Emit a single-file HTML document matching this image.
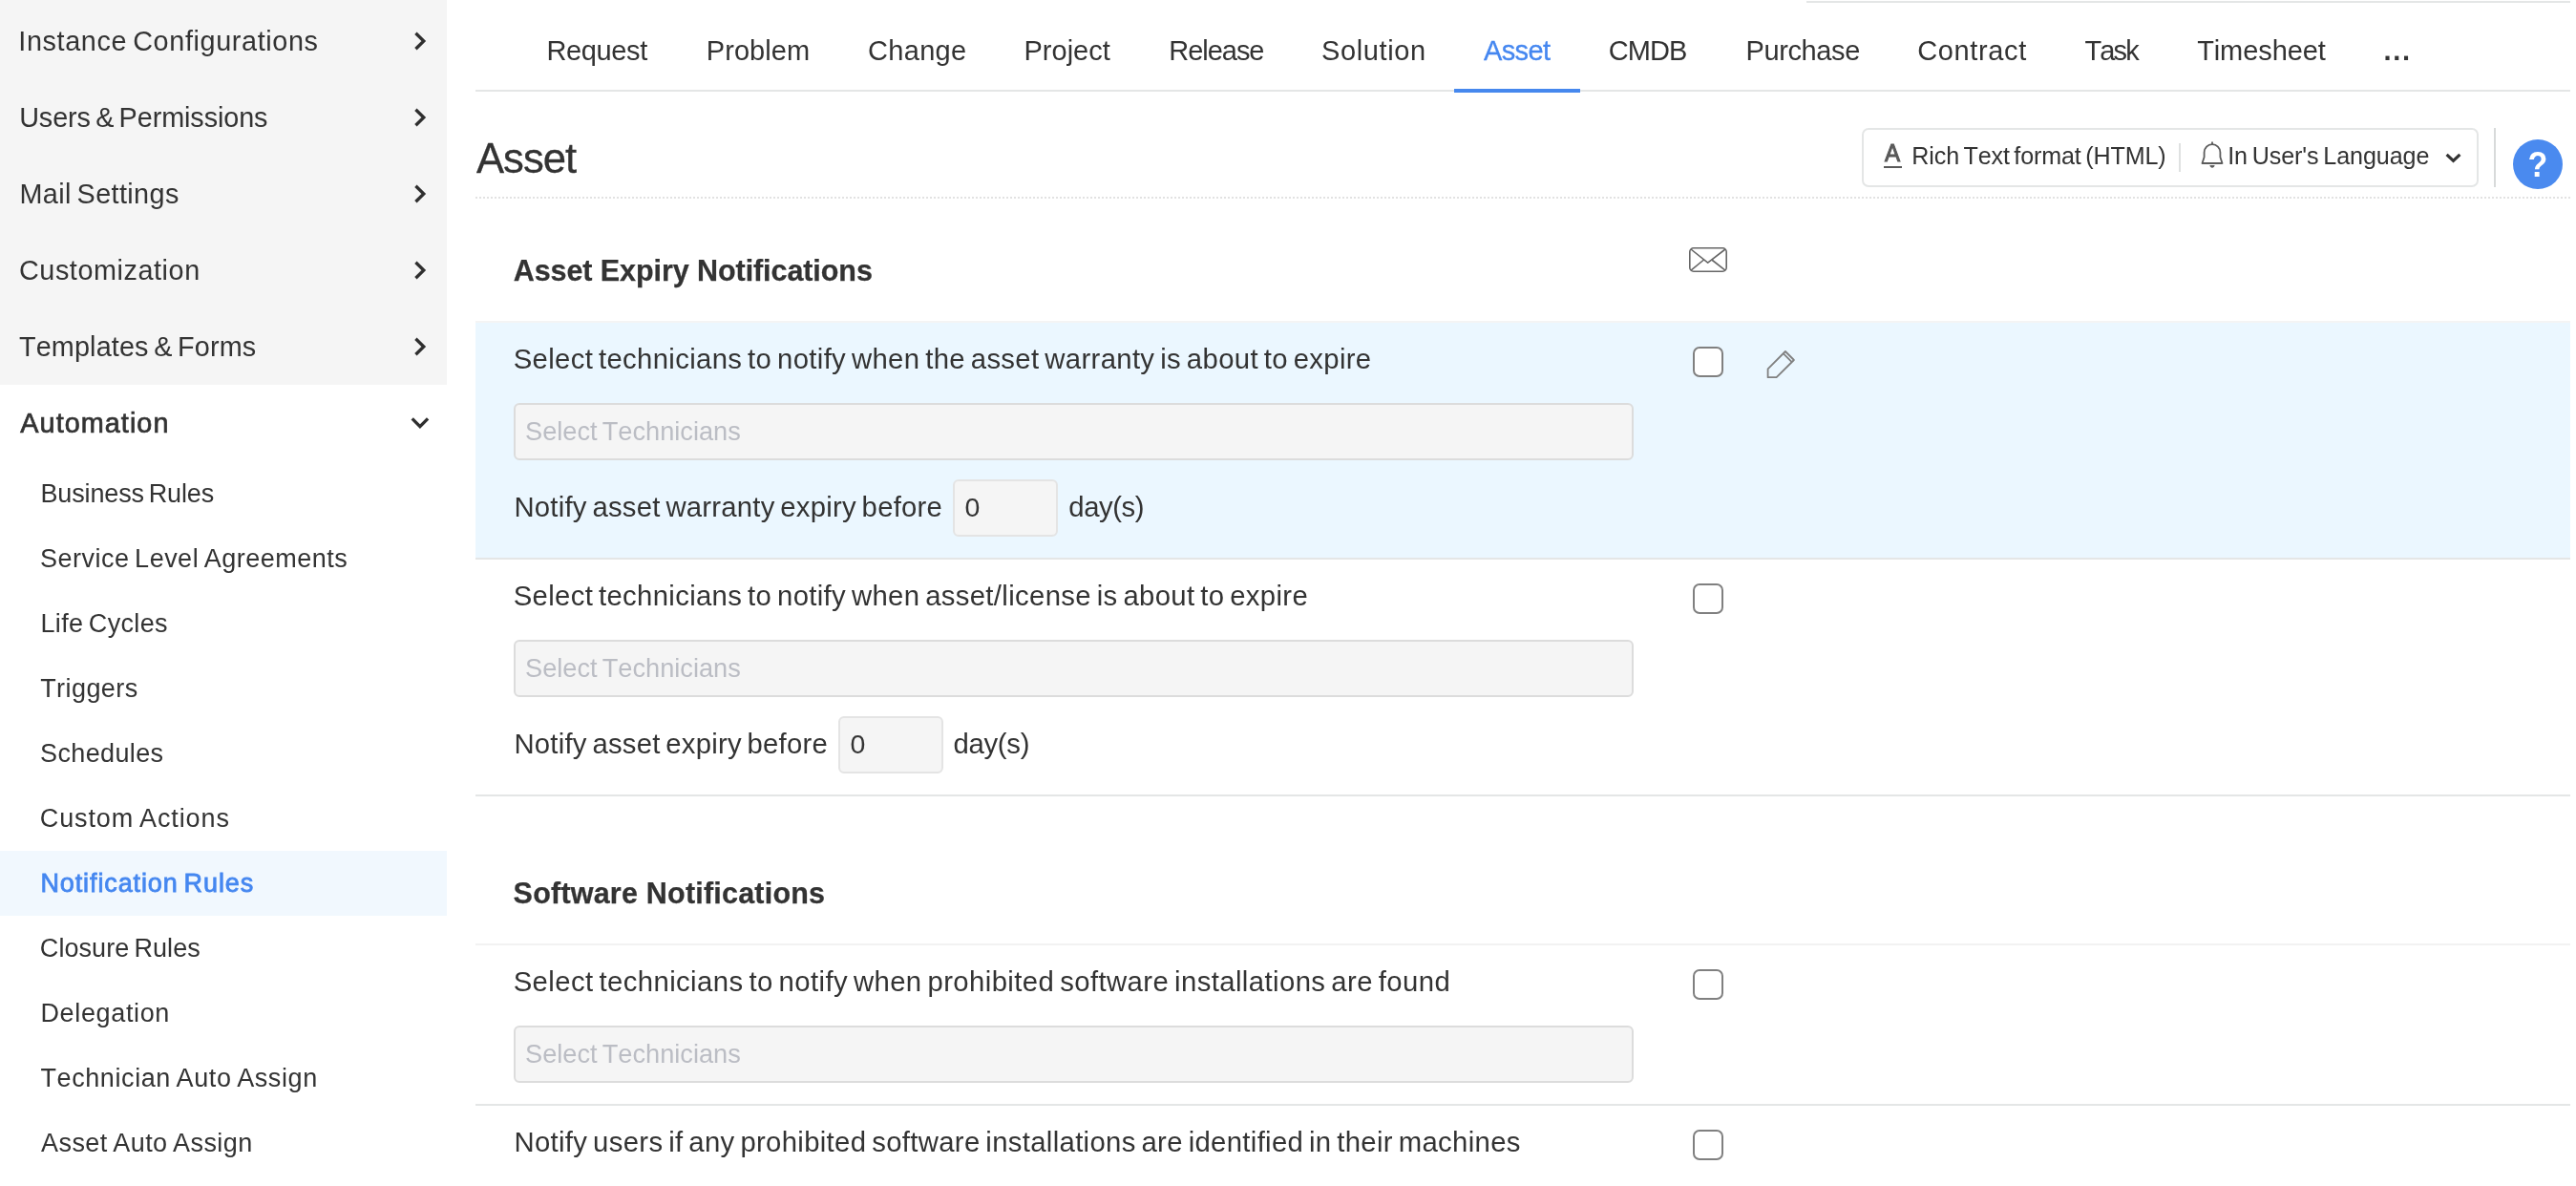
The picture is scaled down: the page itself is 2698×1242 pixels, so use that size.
<!DOCTYPE html>
<html lang="en"><head><meta charset="utf-8"><title>Notification Rules - Asset</title>
<style>
html,body{margin:0;padding:0;background:#fff;}
body{width:2698px;height:1242px;position:relative;overflow:hidden;font-family:"Liberation Sans",Arial,sans-serif;color:#333;}
.g{position:absolute;left:0;top:0;width:2698px;height:1242px;margin:0;padding:0;will-change:transform;}
.b{position:absolute;box-sizing:content-box;}
.ic{left:0;top:0;}
.t{position:absolute;margin:0;padding:0;white-space:nowrap;line-height:1;font-weight:400;color:#333;font-kerning:none;text-decoration:none;}
.inp{border:2px solid #dcdcdc;border-radius:6px;background:#f5f5f5;}
.cb{width:28px;height:28px;border:2px solid #808080;border-radius:7px;background:#fff;}
</style></head><body>
<aside class="g" id="sidebar">
<div class="b" style="left:0px;top:0px;width:468px;height:403px;background:#f5f5f5;"></div>
<div class="b" style="left:0px;top:891px;width:468px;height:68px;background:#f1f8fe;"></div>
<svg class="b ic" width="2698" height="1242" viewBox="0 0 2698 1242" fill="none"><g stroke="#2f2f2f" stroke-width="3.3" stroke-linejoin="miter"><path d="M435.4 34.8L443.8 43.0L435.4 51.2"/><path d="M435.4 114.8L443.8 123.0L435.4 131.2"/><path d="M435.4 194.8L443.8 203.0L435.4 211.2"/><path d="M435.4 274.8L443.8 283.0L435.4 291.2"/><path d="M435.4 354.8L443.8 363.0L435.4 371.2"/><path d="M431.7 438.4L439.9 446.7L448.1 438.4"/></g></svg>
<a class="t" style="left:19.34px;top:29px;font-size:28.8px;letter-spacing:0.623px;word-spacing:-2.59px;">Instance Configurations</a>
<a class="t" style="left:20.13px;top:109px;font-size:28.8px;letter-spacing:-0.093px;word-spacing:-2.59px;">Users &amp; Permissions</a>
<a class="t" style="left:20.39px;top:189px;font-size:28.8px;letter-spacing:0.390px;word-spacing:-2.59px;">Mail Settings</a>
<a class="t" style="left:19.94px;top:269px;font-size:28.8px;letter-spacing:0.563px;">Customization</a>
<a class="t" style="left:19.95px;top:349px;font-size:28.8px;letter-spacing:0.138px;word-spacing:-2.59px;">Templates &amp; Forms</a>
<a class="t" style="left:21.34px;top:429px;font-size:28.8px;letter-spacing:1.049px;-webkit-text-stroke:0.7px #333;">Automation</a>
<a class="t" style="left:42.49px;top:504px;font-size:27.0px;letter-spacing:-0.151px;word-spacing:-2.43px;">Business Rules</a>
<a class="t" style="left:42.12px;top:572px;font-size:27.0px;letter-spacing:0.489px;word-spacing:-2.43px;">Service Level Agreements</a>
<a class="t" style="left:42.49px;top:640px;font-size:27.0px;letter-spacing:0.347px;word-spacing:-2.43px;">Life Cycles</a>
<a class="t" style="left:42.19px;top:708px;font-size:27.0px;letter-spacing:0.423px;">Triggers</a>
<a class="t" style="left:42.12px;top:776px;font-size:27.0px;letter-spacing:0.358px;">Schedules</a>
<a class="t" style="left:41.83px;top:844px;font-size:27.0px;letter-spacing:0.878px;word-spacing:-2.43px;">Custom Actions</a>
<a class="t" style="left:42.44px;top:912px;font-size:27.0px;letter-spacing:0.887px;word-spacing:-2.43px;color:#4587f0;-webkit-text-stroke:0.8px #4587f0;">Notification Rules</a>
<a class="t" style="left:41.83px;top:980px;font-size:27.0px;letter-spacing:0.067px;word-spacing:-2.43px;">Closure Rules</a>
<a class="t" style="left:42.49px;top:1048px;font-size:27.0px;letter-spacing:0.642px;">Delegation</a>
<a class="t" style="left:42.49px;top:1116px;font-size:27.0px;letter-spacing:0.589px;word-spacing:-2.43px;">Technician Auto Assign</a>
<a class="t" style="left:43.05px;top:1184px;font-size:27.0px;letter-spacing:0.435px;word-spacing:-2.43px;">Asset Auto Assign</a>
</aside>
<nav class="g" id="tabs">
<div class="b" style="left:1892px;top:1px;width:800px;height:2px;background:#e4e6e6;"></div>
<div class="b" style="left:498px;top:94px;width:2194px;height:2px;background:#e4e6e6;"></div>
<div class="b" style="left:1523px;top:93px;width:132px;height:4px;background:#4688ee;"></div>
<a class="t" style="left:572.42px;top:39px;font-size:29.0px;letter-spacing:-0.354px;">Request</a>
<a class="t" style="left:739.72px;top:39px;font-size:29.0px;letter-spacing:0.084px;">Problem</a>
<a class="t" style="left:909.03px;top:39px;font-size:29.0px;letter-spacing:0.315px;">Change</a>
<a class="t" style="left:1072.52px;top:39px;font-size:29.0px;letter-spacing:0.006px;">Project</a>
<a class="t" style="left:1224.32px;top:39px;font-size:29.0px;letter-spacing:-1.039px;">Release</a>
<a class="t" style="left:1384.08px;top:39px;font-size:29.0px;letter-spacing:0.600px;">Solution</a>
<a class="t" style="left:1553.94px;top:39px;font-size:29.0px;letter-spacing:-0.590px;color:#4587f0;-webkit-text-stroke:0.3px #4587f0;">Asset</a>
<a class="t" style="left:1684.63px;top:39px;font-size:29.0px;letter-spacing:-0.861px;">CMDB</a>
<a class="t" style="left:1828.42px;top:39px;font-size:29.0px;letter-spacing:-0.364px;">Purchase</a>
<a class="t" style="left:2008.13px;top:39px;font-size:29.0px;letter-spacing:0.655px;">Contract</a>
<a class="t" style="left:2183.45px;top:39px;font-size:29.0px;letter-spacing:-1.845px;">Task</a>
<a class="t" style="left:2301.15px;top:39px;font-size:29.0px;letter-spacing:-0.090px;">Timesheet</a>
<a class="t" style="left:2496.53px;top:39px;font-size:29.0px;letter-spacing:1.647px;font-weight:700;">...</a>
</nav>
<header class="g" id="page-header">
<h1 class="t" style="left:498.91px;top:145px;font-size:43.6px;letter-spacing:-0.935px;-webkit-text-stroke:0.3px #333;">Asset</h1>
<div class="b" style="left:498px;top:206px;width:2194px;height:2px;background:repeating-linear-gradient(90deg,#e2e2e2 0 2px,transparent 2px 4px);"></div>
<div class="b" style="left:1950px;top:134px;width:642px;height:58px;border:2px solid #e4e6e6;border-radius:7px;background:#fff;"></div>
<span class="t" style="left:1974.35px;top:148px;font-size:24.9px;color:#595959;-webkit-text-stroke:1px #595959;transform:scaleX(.97);transform-origin:0 0;">A</span>
<div class="b" style="left:1973px;top:174px;width:19px;height:2px;background:#5a5a5a;"></div>
<span class="t" style="left:2002.34px;top:151px;font-size:25.1px;letter-spacing:-0.138px;word-spacing:-2.26px;">Rich Text format (HTML)</span>
<div class="b" style="left:2282px;top:150px;width:2px;height:30px;background:#dfe1e1;"></div>
<svg class="b ic" width="2698" height="1242" viewBox="0 0 2698 1242" fill="none"><g stroke="#5c5c5c" stroke-width="1.8" stroke-linejoin="round"><path d="M2317 148.4V151"/><path d="M2306.5 171L2308.6 164.5V159.5A8.4 8.4 0 0 1 2325.4 159.5V164.5L2327.5 171Z"/><path d="M2314.8 173.6A2.3 2.3 0 0 0 2319.2 173.6Z" fill="#5c5c5c" stroke-width="1"/></g><path d="M2562.6 161.9L2569.5 168.3L2576.4 161.9" stroke="#333" stroke-width="3.2"/></svg>
<span class="t" style="left:2333.18px;top:151px;font-size:25.1px;letter-spacing:-0.061px;word-spacing:-2.26px;">In User's Language</span>
<div class="b" style="left:2612px;top:134px;width:2px;height:62px;background:#d8dada;"></div>
<div class="b" style="left:2632px;top:146px;width:52px;height:52px;border-radius:50%;background:#4a8aef;"></div>
<span class="t" style="left:2632px;top:154.1px;width:52px;text-align:center;font-size:37px;font-weight:700;color:#fff;transform:scaleX(.92);">?</span>
</header>
<section class="g" id="asset-expiry">
<h2 class="t" style="left:537.74px;top:268px;font-size:30.5px;letter-spacing:-0.074px;font-weight:700;-webkit-text-stroke:0.25px #333;">Asset Expiry Notifications</h2>
<div class="b" style="left:498px;top:336px;width:2194px;height:2px;background:#f4f4f4;"></div>
<div class="b" style="left:498px;top:338px;width:2194px;height:246px;background:#ebf7ff;"></div>
<div class="b" style="left:498px;top:584px;width:2194px;height:2px;background:#e4e6e6;"></div>
<label class="t" style="left:537.67px;top:361px;font-size:29.3px;letter-spacing:0.339px;word-spacing:-2.64px;">Select technicians to notify when the asset warranty is about to expire</label>
<div class="b cb" style="left:1773px;top:363px;"></div>
<div class="b inp" style="left:538px;top:422px;width:1169px;height:56px;"></div>
<span class="t" style="left:550.06px;top:438px;font-size:27.2px;word-spacing:-2.45px;color:#bbbdc4;">Select Technicians</span>
<label class="t" style="left:538.45px;top:516px;font-size:29.3px;letter-spacing:0.234px;word-spacing:-2.64px;">Notify asset warranty expiry before</label>
<div class="b inp" style="left:998px;top:502px;width:106px;height:56px;border-color:#e4e4e4;"></div>
<span class="t" style="left:1010.49px;top:517px;font-size:28.5px;">0</span>
<span class="t" style="left:1119.27px;top:516px;font-size:29.3px;letter-spacing:-0.431px;">day(s)</span>
<label class="t" style="left:537.67px;top:609px;font-size:29.3px;letter-spacing:0.338px;word-spacing:-2.64px;">Select technicians to notify when asset/license is about to expire</label>
<div class="b cb" style="left:1773px;top:611px;"></div>
<div class="b inp" style="left:538px;top:670px;width:1169px;height:56px;"></div>
<span class="t" style="left:550.06px;top:686px;font-size:27.2px;word-spacing:-2.45px;color:#bbbdc4;">Select Technicians</span>
<label class="t" style="left:538.45px;top:764px;font-size:29.3px;letter-spacing:0.228px;word-spacing:-2.64px;">Notify asset expiry before</label>
<div class="b inp" style="left:878px;top:750px;width:106px;height:56px;border-color:#e4e4e4;"></div>
<span class="t" style="left:890.49px;top:765px;font-size:28.5px;">0</span>
<span class="t" style="left:998.47px;top:764px;font-size:29.3px;letter-spacing:-0.291px;">day(s)</span>
<div class="b" style="left:498px;top:832px;width:2194px;height:2px;background:#e4e6e6;"></div>
<svg class="b ic" width="2698" height="1242" viewBox="0 0 2698 1242" fill="none"><g stroke="#666" stroke-width="1.6" stroke-linejoin="round"><rect x="1769.8" y="259.8" width="38.4" height="24.4" rx="4"/><path d="M1771 261L1788.7 275.2L1807 261"/><path d="M1771 283.2L1784.6 272M1807 283.2L1792.8 272"/></g><g stroke="#808080" stroke-width="1.8" stroke-linejoin="round"><path d="M1851.6 395.2V386.3L1869.9 368L1878.9 377L1860.6 395.2Z"/><path d="M1867.7 370.2L1876.7 379.2"/></g></svg>
</section>
<section class="g" id="software">
<h2 class="t" style="left:537.62px;top:920px;font-size:30.5px;letter-spacing:0.212px;font-weight:700;-webkit-text-stroke:0.25px #333;">Software Notifications</h2>
<div class="b" style="left:498px;top:988px;width:2194px;height:2px;background:#f2f2f2;"></div>
<label class="t" style="left:537.67px;top:1013px;font-size:29.3px;letter-spacing:0.407px;word-spacing:-2.64px;">Select technicians to notify when prohibited software installations are found</label>
<div class="b cb" style="left:1773px;top:1015px;"></div>
<div class="b inp" style="left:538px;top:1074px;width:1169px;height:56px;"></div>
<span class="t" style="left:550.06px;top:1090px;font-size:27.2px;word-spacing:-2.45px;color:#bbbdc4;">Select Technicians</span>
<div class="b" style="left:498px;top:1156px;width:2194px;height:2px;background:#e4e6e6;"></div>
<label class="t" style="left:538.45px;top:1181px;font-size:29.3px;letter-spacing:0.327px;word-spacing:-2.64px;">Notify users if any prohibited software installations are identified in their machines</label>
<div class="b cb" style="left:1773px;top:1183px;"></div>
</section>
</body></html>
